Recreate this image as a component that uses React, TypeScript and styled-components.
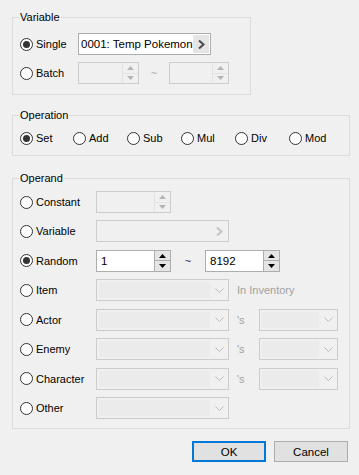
import React from 'react';
import styled, { createGlobalStyle } from 'styled-components';

const GlobalStyle = createGlobalStyle`
	body {
		margin: 0;
		background: #f0f0f0;
		font-family: 'Liberation Sans', Arial, sans-serif;
		font-size: 11px;
		color: #000;
	}
`;

const Dialog = styled.div`
	width: 359px;
	height: 475px;
	box-sizing: border-box;
	padding: 9px 9px 0 12px;
	display: flex;
	flex-direction: column;
	background: #f0f0f0;
`;

const GroupBox = styled.fieldset<{ $width: number }>`
	width: ${(p) => p.$width}px;
	box-sizing: border-box;
	margin: 0;
	padding: 0 6px 0 7px;
	border: 1px solid #dcdcdc;
	min-inline-size: 0;
`;

const Legend = styled.legend`
	margin-left: -1px;
	padding: 0 1px;
	line-height: 16px;
`;

const Rows = styled.div<{ $top: number; $bottom: number; $gap: number }>`
	display: flex;
	flex-direction: column;
	gap: ${(p) => p.$gap}px;
	padding: ${(p) => p.$top}px 0 ${(p) => p.$bottom}px;
`;

const Row = styled.div`
	display: flex;
	align-items: center;
	height: 22px;
`;

const RadioOption = styled.label<{ $width: number }>`
	display: flex;
	align-items: center;
	gap: 3px;
	width: ${(p) => p.$width}px;
	flex: none;
	white-space: nowrap;
`;

const Circle = styled.span<{ $checked?: boolean }>`
	width: 13px;
	height: 13px;
	box-sizing: border-box;
	border: 1px solid #333;
	border-radius: 50%;
	background: #fff;
	display: flex;
	align-items: center;
	justify-content: center;
	flex: none;

	&::after {
		content: '';
		display: ${(p) => (p.$checked ? 'block' : 'none')};
		width: 7px;
		height: 7px;
		border-radius: 50%;
		background: #333;
	}
`;

const Field = styled.div<{ $width: number; $disabled?: boolean }>`
	width: ${(p) => p.$width}px;
	height: 22px;
	box-sizing: border-box;
	border: 1px solid ${(p) => (p.$disabled ? '#cccccc' : '#adadad')};
	background: ${(p) => (p.$disabled ? '#f0f0f0' : '#fff')};
	display: flex;
	align-items: stretch;
	flex: none;
	overflow: hidden;
`;

const FieldText = styled.span<{ $pad?: number }>`
	flex: 1;
	min-width: 0;
	padding-left: ${(p) => p.$pad ?? 2}px;
	display: flex;
	align-items: center;
	white-space: nowrap;
	overflow: hidden;
	font-size: 11.5px;
	color: #000;
`;

const SpinColumn = styled.div`
	width: 16px;
	display: flex;
	flex-direction: column;
`;

const SpinButton = styled.div<{ $disabled?: boolean }>`
	flex: 1;
	border: 1px solid ${(p) => (p.$disabled ? '#e3e3e3' : '#adadad')};
	border-width: 0 0 0 1px;
	background: ${(p) => (p.$disabled ? '#f0f0f0' : '#e5e5e5')};
	display: flex;
	align-items: center;
	justify-content: center;

	& + & {
		border-top-width: 1px;
	}
`;

const PickButton = styled.div<{ $disabled?: boolean }>`
	width: 16px;
	flex: none;
	margin: 1px 1px 1px 0;
	background: ${(p) => (p.$disabled ? 'transparent' : '#e5e5e5')};
	display: flex;
	align-items: center;
	justify-content: center;
`;

const ComboText = styled.span`
	flex: 1;
	margin: 2px 0 2px 2px;
	background: #ebebeb;
`;

const ComboArrow = styled.div`
	width: 18px;
	display: flex;
	align-items: center;
	justify-content: center;
`;

const Tilde = styled.span<{ $width: number; $disabled?: boolean }>`
	width: ${(p) => p.$width}px;
	text-align: center;
	color: ${(p) => (p.$disabled ? '#a8a8a8' : '#1a1a5a')};
	flex: none;
`;

const Note = styled.span<{ $width?: number }>`
	margin-left: 8px;
	width: ${(p) => (p.$width ? `${p.$width}px` : 'auto')};
	color: #a0a0a0;
	flex: none;
	white-space: nowrap;
`;

const Spacer = styled.div<{ $h: number }>`
	height: ${(p) => p.$h}px;
	flex: none;
`;

const ButtonBar = styled.div`
	display: flex;
	justify-content: flex-end;
	gap: 8px;
	padding-right: 2px;
`;

const DialogButton = styled.button<{ $primary?: boolean }>`
	all: unset;
	width: 74px;
	height: 21px;
	box-sizing: border-box;
	border: ${(p) => (p.$primary ? '2px solid #0078d7' : '1px solid #adadad')};
	background: #e1e1e1;
	display: flex;
	align-items: center;
	justify-content: center;
	font-size: 11.5px;
`;

function Arrow({ dir, color }: { dir: 'up' | 'down'; color: string }) {
	return (
		<svg width='7' height='4' viewBox='0 0 7 4'>
			<path d={dir === 'up' ? 'M0 4 L3.5 0 L7 4 Z' : 'M0 0 L3.5 4 L7 0 Z'} fill={color} />
		</svg>
	);
}

function Radio({ label, width, checked }: { label: string; width: number; checked?: boolean }) {
	return (
		<RadioOption $width={width}>
			<Circle $checked={checked} />
			{label}
		</RadioOption>
	);
}

function SpinBox({ width, value, disabled }: { width: number; value?: string; disabled?: boolean }) {
	const c = disabled ? '#b5b5b5' : '#000';
	return (
		<Field $width={width} $disabled={disabled}>
			<FieldText $pad={4}>{value}</FieldText>
			<SpinColumn>
				<SpinButton $disabled={disabled}>
					<Arrow dir='up' color={c} />
				</SpinButton>
				<SpinButton $disabled={disabled}>
					<Arrow dir='down' color={c} />
				</SpinButton>
			</SpinColumn>
		</Field>
	);
}

function Picker({ width, value, disabled }: { width: number; value?: string; disabled?: boolean }) {
	return (
		<Field $width={width} $disabled={disabled}>
			<FieldText>{value}</FieldText>
			<PickButton $disabled={disabled}>
				<svg width='7' height='9' viewBox='0 0 7 9'>
					<path
						d='M1 0.5 L5.5 4.5 L1 8.5'
						fill='none'
						stroke={disabled ? '#c4c4c4' : '#4a4a4a'}
						strokeWidth='2'
					/>
				</svg>
			</PickButton>
		</Field>
	);
}

function Combo({ width }: { width: number }) {
	return (
		<Field $width={width} $disabled>
			<ComboText />
			<ComboArrow>
				<svg width='9' height='5' viewBox='0 0 9 5'>
					<path d='M0.5 0.5 L4.5 4.5 L8.5 0.5' fill='none' stroke='#bcbcbc' strokeWidth='1' />
				</svg>
			</ComboArrow>
		</Field>
	);
}

const operations = ['Set', 'Add', 'Sub', 'Mul', 'Div', 'Mod'];

function App() {
	return (
		<>
			<GlobalStyle />
			<Dialog>
				<GroupBox $width={239}>
					<Legend>Variable</Legend>
					<Rows $top={8} $bottom={10} $gap={7}>
						<Row>
							<Radio label='Single' width={58} checked />
							<Picker width={133} value='0001: Temp Pokemon Count' />
						</Row>
						<Row>
							<Radio label='Batch' width={58} />
							<SpinBox width={61} disabled />
							<Tilde $width={30} $disabled>
								~
							</Tilde>
							<SpinBox width={60} disabled />
						</Row>
					</Rows>
				</GroupBox>

				<Spacer $h={12} />

				<GroupBox $width={338}>
					<Legend>Operation</Legend>
					<Rows $top={4} $bottom={6} $gap={0}>
						<Row>
							{operations.map((op, i) => (
								<Radio key={op} label={op} width={i === 0 ? 53 : 54} checked={i === 0} />
							))}
						</Row>
					</Rows>
				</GroupBox>

				<Spacer $h={14} />

				<GroupBox $width={338}>
					<Legend>Operand</Legend>
					<Rows $top={5} $bottom={9} $gap={7.45}>
						<Row>
							<Radio label='Constant' width={76} />
							<SpinBox width={75} disabled />
						</Row>
						<Row>
							<Radio label='Variable' width={76} />
							<Picker width={133} disabled />
						</Row>
						<Row>
							<Radio label='Random' width={76} checked />
							<SpinBox width={75} value='1' />
							<Tilde $width={34}>~</Tilde>
							<SpinBox width={75} value='8192' />
						</Row>
						<Row>
							<Radio label='Item' width={76} />
							<Combo width={133} />
							<Note>In Inventory</Note>
						</Row>
						<Row>
							<Radio label='Actor' width={76} />
							<Combo width={133} />
							<Note $width={22}>'s</Note>
							<Combo width={79} />
						</Row>
						<Row>
							<Radio label='Enemy' width={76} />
							<Combo width={133} />
							<Note $width={22}>'s</Note>
							<Combo width={79} />
						</Row>
						<Row>
							<Radio label='Character' width={76} />
							<Combo width={133} />
							<Note $width={22}>'s</Note>
							<Combo width={79} />
						</Row>
						<Row>
							<Radio label='Other' width={76} />
							<Combo width={133} />
						</Row>
					</Rows>
				</GroupBox>

				<Spacer $h={12} />

				<ButtonBar>
					<DialogButton $primary>OK</DialogButton>
					<DialogButton>Cancel</DialogButton>
				</ButtonBar>
			</Dialog>
		</>
	);
}

export default App;
